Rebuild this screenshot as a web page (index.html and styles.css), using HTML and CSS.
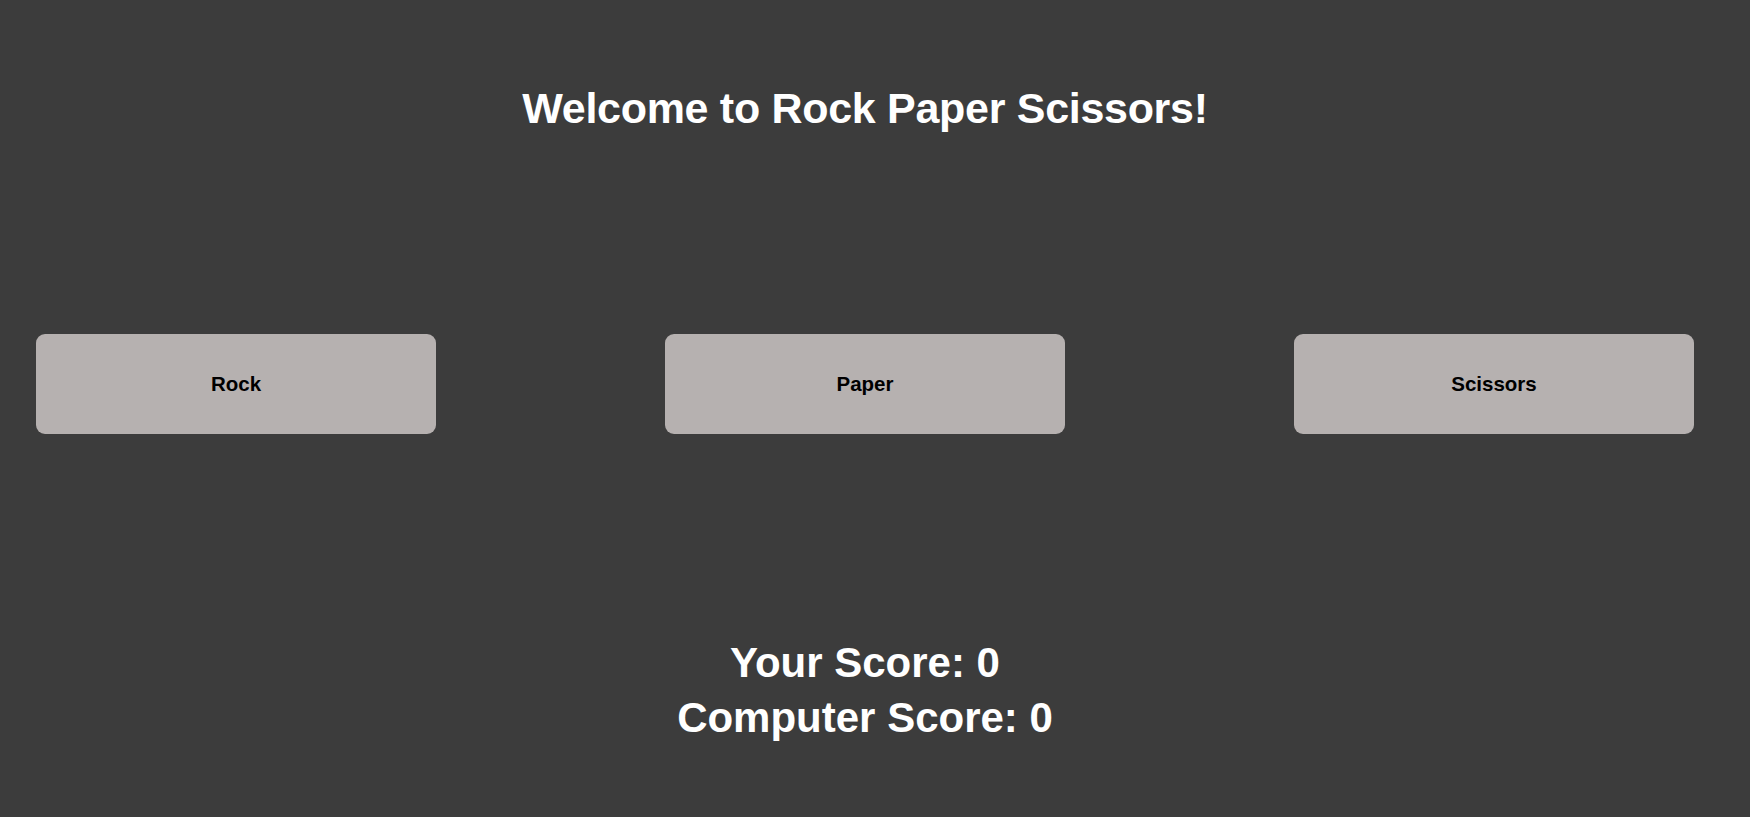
FILE: index.html
```html
<!DOCTYPE html>
<html lang="en">
<head>
<meta charset="utf-8">
<title>Rock Paper Scissors</title>
<link rel="stylesheet" href="styles.css">
</head>
<body>
<main class="page">
  <h1 class="title">Welcome to Rock Paper Scissors!</h1>
  <div class="choices">
    <button class="choice">Rock</button>
    <button class="choice">Paper</button>
    <button class="choice">Scissors</button>
  </div>
  <div class="scores">
    <div class="score">Your Score: 0</div>
    <div class="score">Computer Score: 0</div>
  </div>
</main>
</body>
</html>
```
FILE: styles.css
```css
html, body {
  margin: 0;
  padding: 0;
  background: #3c3c3c;
}
body {
  font-family: "Liberation Sans", Arial, sans-serif;
  color: #ffffff;
}
.page {
  display: flex;
  flex-direction: column;
  padding: 87px 20px 0 0;
}
.title {
  margin: 0;
  text-align: center;
  font-size: 43px;
  line-height: 43px;
  font-weight: bold;
  letter-spacing: -0.3px;
}
.choices {
  display: flex;
  justify-content: space-between;
  margin-top: 204px;
  padding: 0 36px;
}
.choice {
  width: 400px;
  height: 100px;
  border: none;
  border-radius: 9px;
  background: #b6b1b0;
  color: #000000;
  font-family: "Liberation Sans", Arial, sans-serif;
  font-size: 20.5px;
  font-weight: bold;
  padding: 0;
  cursor: pointer;
}
.scores {
  margin-top: 201px;
  text-align: center;
  font-size: 42px;
  line-height: 55px;
  font-weight: bold;
}
```
